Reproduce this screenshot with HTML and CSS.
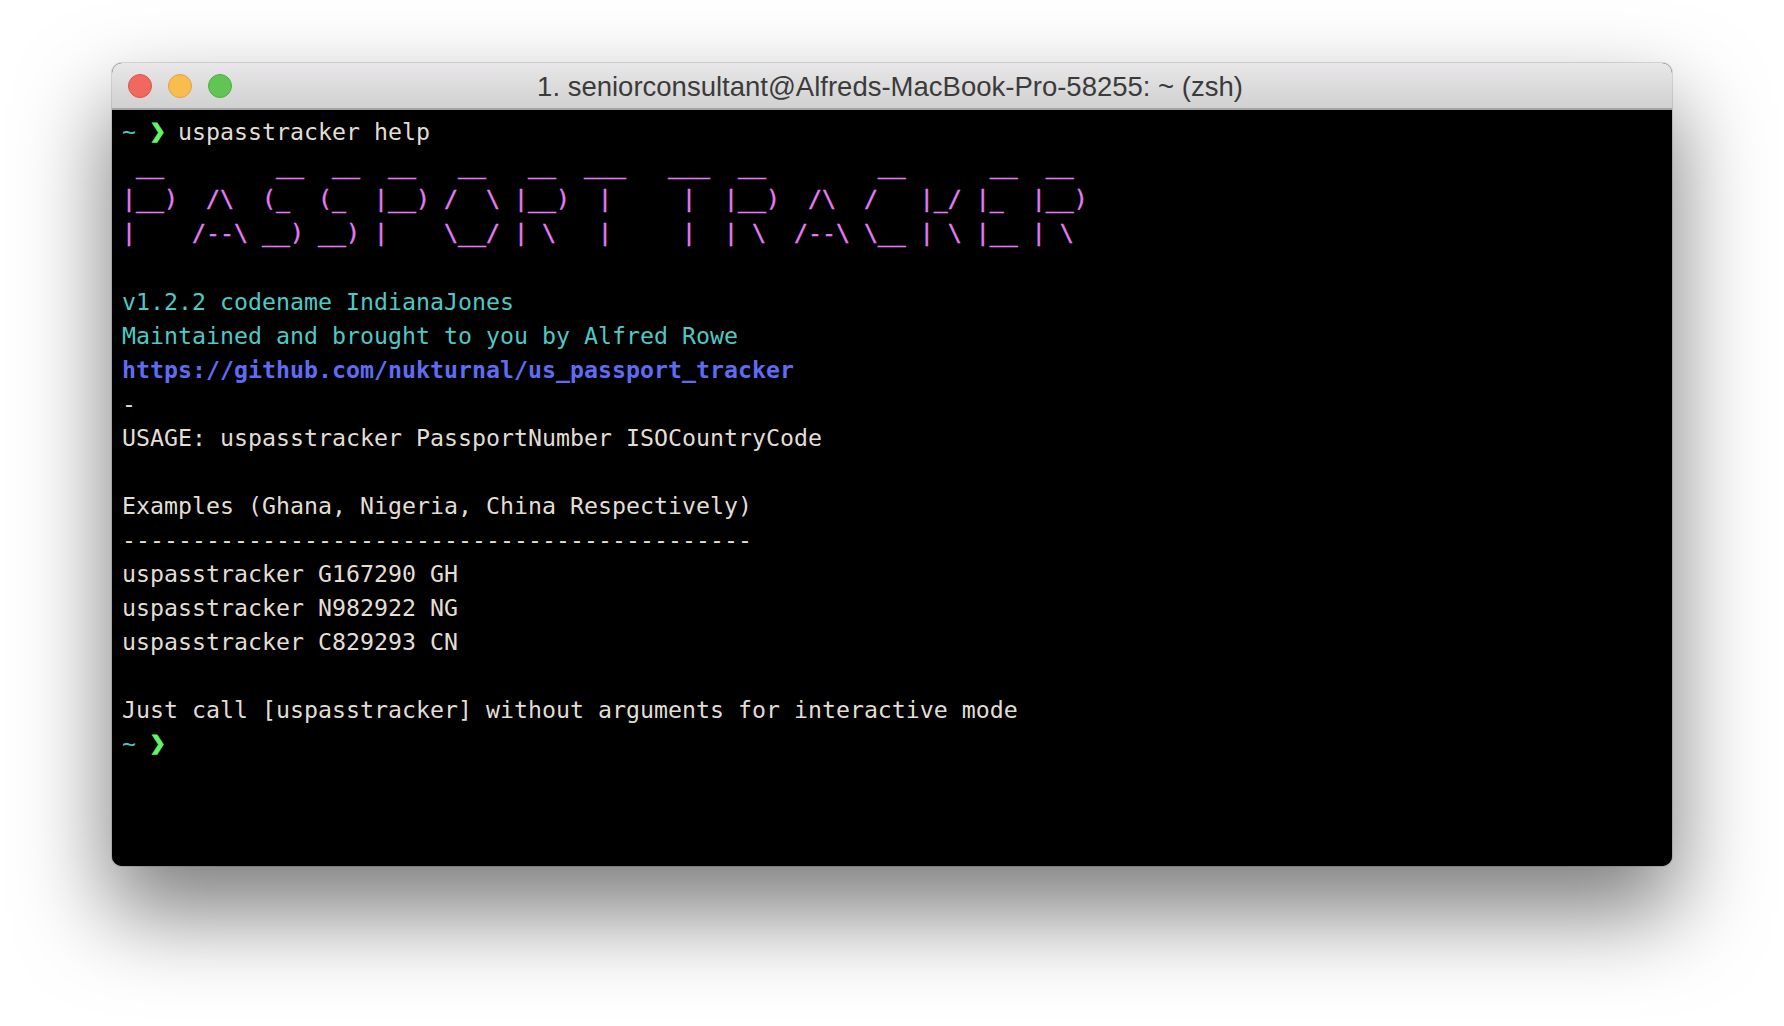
FILE: index.html
```html
<!DOCTYPE html>
<html lang="en">
<head>
<meta charset="utf-8">
<title>Terminal</title>
<link rel="stylesheet" href="styles.css">
</head>
<body>
<main class="window">
  <header class="titlebar">
    <div class="lights">
      <span class="light red"></span>
      <span class="light yellow"></span>
      <span class="light green"></span>
    </div>
    <div class="title">1. seniorconsultant@Alfreds-MacBook-Pro-58255: ~ (zsh)</div>
  </header>
  <pre class="term"><span class="tilde">~</span> <span class="chev">❯</span> uspasstracker help
<span class="art"> __        __  __  __   __   __  ___   ___  __        __      __  __
|__)  /\  (_  (_  |__) /  \ |__)  |     |  |__)  /\  /   |_/ |_  |__)
|    /--\ __) __) |    \__/ | \   |     |  | \  /--\ \__ | \ |__ | \</span>
<span class="cyan">v1.2.2 codename IndianaJones
Maintained and brought to you by Alfred Rowe</span>
<span class="link">https://github.com/nukturnal/us_passport_tracker</span>
-
USAGE: uspasstracker PassportNumber ISOCountryCode

Examples (Ghana, Nigeria, China Respectively)
---------------------------------------------
uspasstracker G167290 GH
uspasstracker N982922 NG
uspasstracker C829293 CN

Just call [uspasstracker] without arguments for interactive mode
<span class="tilde">~</span> <span class="chev">❯</span></pre>
</main>
</body>
</html>
```
FILE: styles.css
```css
html, body {
  margin: 0;
  height: 100%;
  background: #fff;
  overflow: hidden;
}
body {
  padding: 63px 112px 0 112px;
  box-sizing: border-box;
}
.window {
  height: 803px;
  border-radius: 10px;
  overflow: hidden;
  background: #000;
  box-shadow: 0 44px 88px 4px rgba(0, 0, 0, .5), 0 0 0 1px rgba(0, 0, 0, .12);
  display: flex;
  flex-direction: column;
}
.titlebar {
  height: 47px;
  box-sizing: border-box;
  flex: none;
  display: flex;
  align-items: center;
  position: relative;
  padding-left: 16px;
  background: linear-gradient(#e9e7e9, #d1d1d1);
  border-bottom: 2px solid #a3a3a3;
}
.lights {
  display: flex;
  gap: 16px;
}
.light {
  width: 24px;
  height: 24px;
  border-radius: 50%;
  box-sizing: border-box;
}
.red { background: #f1695e; border: 1px solid #dd5348; }
.yellow { background: #f9bd4f; border: 1px solid #e3a33a; }
.green { background: #61c454; border: 1px solid #51ad44; }
.title {
  position: absolute;
  left: 0;
  right: 4px;
  top: 8px;
  text-align: center;
  font: 27.5px "Liberation Sans", Arial, sans-serif;
  color: #3c3b3c;
}
.term {
  margin: 0;
  padding: 5px 10px 0;
  font: 23.25px/34px "DejaVu Sans Mono", monospace;
  color: #e2ded4;
  background: #000;
  flex: 1;
}
.tilde { color: #4fc0c4; }
.chev {
  display: inline-block;
  width: 14px;
  font-size: 26px;
  line-height: 0;
  font-weight: 700;
  color: #62f56a;
  -webkit-text-stroke: 1.2px #62f56a;
}
.art {
  color: #e67cf5;
  -webkit-text-stroke: .4px #e67cf5;
  display: block;
  margin: -1px 0 1px;
}
.cyan { color: #4ec9c4; }
.link { color: #5f6cf2; font-weight: 700; }
```
